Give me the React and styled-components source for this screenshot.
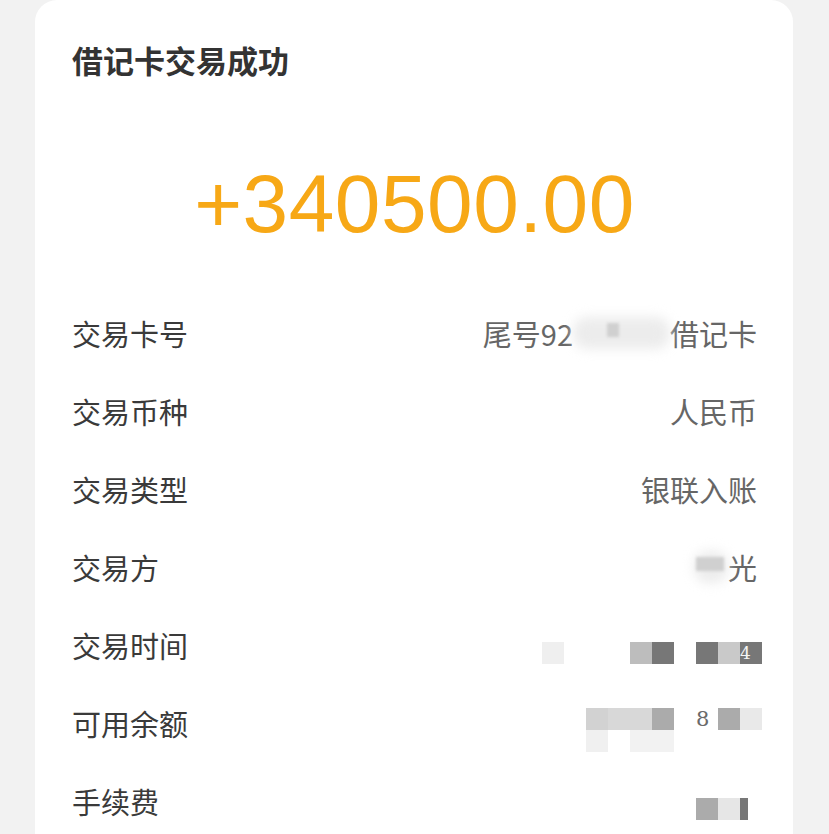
import React from "react";
import styled, { createGlobalStyle } from "styled-components";

const GlobalStyle = createGlobalStyle`
  html, body {
    margin: 0;
    padding: 0;
    background: #f2f2f2;
  }
  body {
    font-family: "Noto Sans CJK SC", "Noto Sans", sans-serif;
  }
`;

const Page = styled.div`
  padding: 0 36px 0 35px;
  height: 834px;
  overflow: hidden;
`;

const Card = styled.div`
  background: #ffffff;
  border-radius: 22px 22px 0 0;
  padding: 44px 36px 0 37px;
  min-height: 834px;
`;

const Title = styled.div`
  font-size: 31px;
  line-height: 31px;
  font-weight: 700;
  color: #333333;
`;

const Amount = styled.div`
  margin-top: 89px;
  text-align: center;
  font-family: "Liberation Sans", Arial, sans-serif;
  font-size: 82px;
  line-height: 80px;
  color: #f7a816;
  letter-spacing: 0.5px;
`;

const List = styled.div`
  margin-top: 50px;
`;

const Row = styled.div`
  display: flex;
  align-items: center;
  justify-content: space-between;
  height: 78px;
`;

const Label = styled.div`
  font-size: 29px;
  line-height: 29px;
  color: #3a3a3a;
`;

const Value = styled.div`
  display: flex;
  align-items: center;
  font-size: 29px;
  line-height: 29px;
  color: #666666;
`;

const Blob = styled.span`
  position: relative;
  display: inline-block;
  width: ${(p) => p.$w}px;
  height: 32px;
  &::before {
    content: "";
    position: absolute;
    inset: 0;
    background: #ececec;
    border-radius: 14px;
    filter: blur(6px);
  }
  &::after {
    content: "";
    position: absolute;
    left: ${(p) => p.$dotLeft}px;
    top: 6px;
    width: ${(p) => p.$dotW}px;
    height: 14px;
    background: #d0d0d0;
    filter: blur(1.5px);
  }
`;

const MosaicGrid = styled.div`
  display: grid;
  grid-template-columns: repeat(10, 22px);
  grid-auto-rows: 22px;
  margin-right: -5px;
  margin-top: ${(p) => p.$shift}px;
`;

const Cell = styled.span`
  background: ${(p) => p.$c || "transparent"};
  color: ${(p) => p.$g || "#666"};
  font-family: "DejaVu Serif", serif;
  font-size: ${(p) => p.$size || 20}px;
  line-height: 22px;
  text-align: ${(p) => p.$align || "center"};
  white-space: nowrap;
`;

const Mosaic = ({ rows, shift }) => (
  <MosaicGrid $shift={shift}>
    {rows.flatMap((r, i) =>
      r.map((cell, j) => {
        if (cell && typeof cell === "object") {
          return (
            <Cell
              key={i + "-" + j}
              $c={cell.c}
              $g={cell.g}
              $size={cell.s}
              $align={cell.a}
            >
              {cell.t}
            </Cell>
          );
        }
        return <Cell key={i + "-" + j} $c={cell} />;
      })
    )}
  </MosaicGrid>
);

const _ = null;

const timeRows = [
  ["#efefef", _, _, _, "#bdbdbd", "#777777", _, "#777777", "#c9c9c9", { c: "#777777", g: "#f4f4f4", t: "4", s: 17, a: "left" }],
];

const balanceRows = [
  [_, _, "#d2d2d2", "#d8d8d8", "#d8d8d8", "#ababab", _, { t: "8", g: "#6a6a6a", s: 21, a: "left" }, "#ababab", "#e9e9e9"],
  [_, _, "#f0f0f0", _, "#f2f2f2", "#f2f2f2", _, _, _, _],
];

const feeRows = [
  [_, _, _, _, _, _, _, "#ababab", "#e6e6e6", { c: "linear-gradient(90deg,#777 0 8px,transparent 8px)", g: "#777", t: "" }],
];

const rows = [
  {
    label: "交易卡号",
    value: (
      <>
        尾号92
        <Blob $w={97} $dotLeft={34} $dotW={12} />
        借记卡
      </>
    ),
  },
  { label: "交易币种", value: "人民币" },
  { label: "交易类型", value: "银联入账" },
  {
    label: "交易方",
    value: (
      <>
        <Blob $w={34} $dotLeft={2} $dotW={28} />光
      </>
    ),
  },
  { label: "交易时间", value: <Mosaic rows={timeRows} shift={16} /> },
  { label: "可用余额", value: <Mosaic rows={balanceRows} shift={14} /> },
  { label: "手续费", value: <Mosaic rows={feeRows} shift={16} /> },
];

export default function App() {
  return (
    <>
      <GlobalStyle />
      <Page>
        <Card>
          <Title>借记卡交易成功</Title>
          <Amount>+340500.00</Amount>
          <List>
            {rows.map((r) => (
              <Row key={r.label}>
                <Label>{r.label}</Label>
                <Value>{r.value}</Value>
              </Row>
            ))}
          </List>
        </Card>
      </Page>
    </>
  );
}
